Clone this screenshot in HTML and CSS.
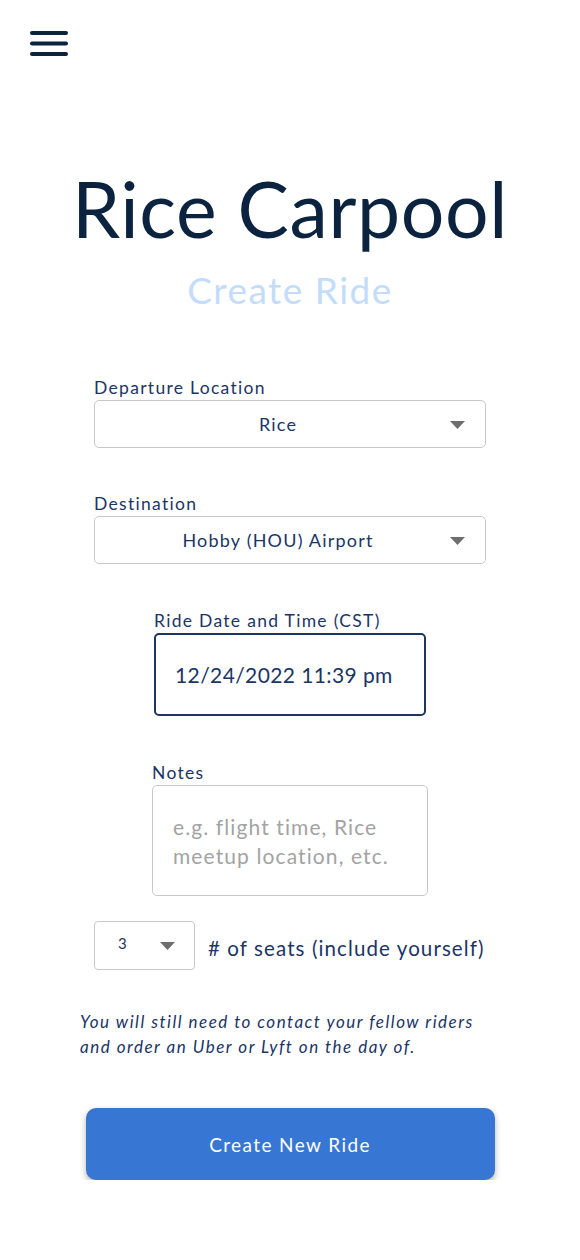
FILE: index.html
```html
<!DOCTYPE html>
<html lang="en">
<head>
<meta charset="utf-8">
<title>Rice Carpool - Create Ride</title>
<link rel="stylesheet" href="styles.css">
</head>
<body>
<header class="topbar">
  <button class="menu-btn" aria-label="Menu">
    <svg width="40" height="26" viewBox="0 0 40 26">
      <g stroke="#0c2340" stroke-width="4" stroke-linecap="round">
        <line x1="3" y1="3" x2="37" y2="3"/>
        <line x1="3" y1="13.5" x2="37" y2="13.5"/>
        <line x1="3" y1="24" x2="37" y2="24"/>
      </g>
    </svg>
  </button>
</header>
<main class="page">
  <h1 class="title">Rice Carpool</h1>
  <h2 class="subtitle">Create Ride</h2>

  <form class="form">
    <div class="field">
      <label class="label">Departure Location</label>
      <div class="select">
        <span class="select-text">Rice</span>
        <svg class="caret" width="15" height="8" viewBox="0 0 15 8"><path d="M0 0H15L7.5 8Z" fill="#6e6e6e"/></svg>
      </div>
    </div>

    <div class="field dest">
      <label class="label">Destination</label>
      <div class="select">
        <span class="select-text">Hobby (HOU) Airport</span>
        <svg class="caret" width="15" height="8" viewBox="0 0 15 8"><path d="M0 0H15L7.5 8Z" fill="#6e6e6e"/></svg>
      </div>
    </div>

    <div class="field date">
      <label class="label">Ride Date and Time (CST)</label>
      <div class="date-input">12/24/2022 11:39 pm</div>
    </div>

    <div class="field notes">
      <label class="label">Notes</label>
      <div class="textarea"><span class="placeholder">e.g. flight time, Rice meetup location, etc.</span></div>
    </div>

    <div class="seats-row">
      <div class="seats-select">
        <span>3</span>
        <svg width="15" height="8" viewBox="0 0 15 8"><path d="M0 0H15L7.5 8Z" fill="#6e6e6e"/></svg>
      </div>
      <span class="seats-label"># of seats (include yourself)</span>
    </div>
  </form>

  <p class="note">You will still need to contact your fellow riders and order an Uber or Lyft on the day of.</p>

  <button class="create-btn" type="button">Create New Ride</button>
</main>
</body>
</html>
```

FILE: styles.css
```css
* { box-sizing: border-box; }

body {
  margin: 0;
  background: #ffffff;
  font-family: "Lato", "Noto Sans", sans-serif;
  color: #1b3566;
}

.topbar {
  padding: 30px 0 0 29px;
  height: 60px;
}

.menu-btn {
  border: 0;
  background: none;
  padding: 0;
  display: block;
}

.page {
  display: flex;
  flex-direction: column;
  align-items: center;
}

.title {
  margin: 110px 0 0;
  font-size: 77px;
  font-weight: 400;
  line-height: 1;
  color: #0c2340;
  letter-spacing: 0.6px;
}

.subtitle {
  margin: 24px 0 0;
  font-size: 37px;
  font-weight: 400;
  line-height: 1;
  color: #c4dcfb;
  letter-spacing: 1.5px;
}

.form {
  width: 392px;
  margin-top: 70px;
  display: flex;
  flex-direction: column;
  align-items: center;
}

.field {
  display: flex;
  flex-direction: column;
  width: 100%;
}

.label {
  font-size: 17.5px;
  line-height: 20px;
  color: #1b3566;
  letter-spacing: 1.3px;
  margin-bottom: 2px;
}

.select {
  position: relative;
  height: 48px;
  border: 1px solid #c9c9c9;
  border-radius: 5px;
  display: flex;
  align-items: center;
  padding-right: 24px;
}

.select-text {
  flex: 1;
  text-align: center;
  font-size: 18px;
  color: #1b3566;
  letter-spacing: 1.2px;
}

.caret {
  position: absolute;
  right: 20px;
  top: 20px;
}

.dest { margin-top: 46px; }

.date {
  width: 272px;
  margin-top: 47px;
}

.date-input {
  height: 83px;
  border: 2px solid #1c3563;
  border-radius: 5px;
  padding-left: 19px;
  display: flex;
  align-items: center;
  font-size: 21px;
  color: #1b3566;
  letter-spacing: 0.4px;
}

.notes {
  width: 276px;
  margin-top: 47px;
}

.textarea {
  height: 111px;
  border: 1px solid #c9c9c9;
  border-radius: 5px;
  padding: 26px 18px 0 20px;
  font-size: 21px;
  line-height: 29px;
  color: #a3a3a3;
  letter-spacing: 1.1px;
}

.seats-row {
  align-self: flex-start;
  margin-top: 25px;
  display: flex;
  align-items: center;
  gap: 13px;
}

.seats-select {
  width: 101px;
  height: 49px;
  border: 1px solid #c9c9c9;
  border-radius: 4px;
  display: flex;
  align-items: center;
  justify-content: space-between;
  padding: 0 19px 6px 23px;
  font-size: 15px;
  color: #1b3566;
}

.seats-select svg { margin-top: 6px; }

.seats-label {
  font-size: 20.5px;
  color: #1b3566;
  letter-spacing: 1.1px;
  margin-top: 4px;
  white-space: nowrap;
}

.note {
  width: 420px;
  margin: 39px 0 0;
  padding-right: 14px;
  font-size: 17px;
  line-height: 25px;
  font-style: italic;
  color: #1b3566;
  letter-spacing: 1.5px;
}

.create-btn {
  margin-top: 49px;
  width: 409px;
  height: 72px;
  border: 0;
  border-radius: 10px;
  background: #3876d3;
  color: #ffffff;
  font-family: "Lato", "Noto Sans", sans-serif;
  font-size: 19px;
  letter-spacing: 1.4px;
  box-shadow: 0 3px 6px rgba(0, 0, 0, 0.3);
  cursor: pointer;
}
```
